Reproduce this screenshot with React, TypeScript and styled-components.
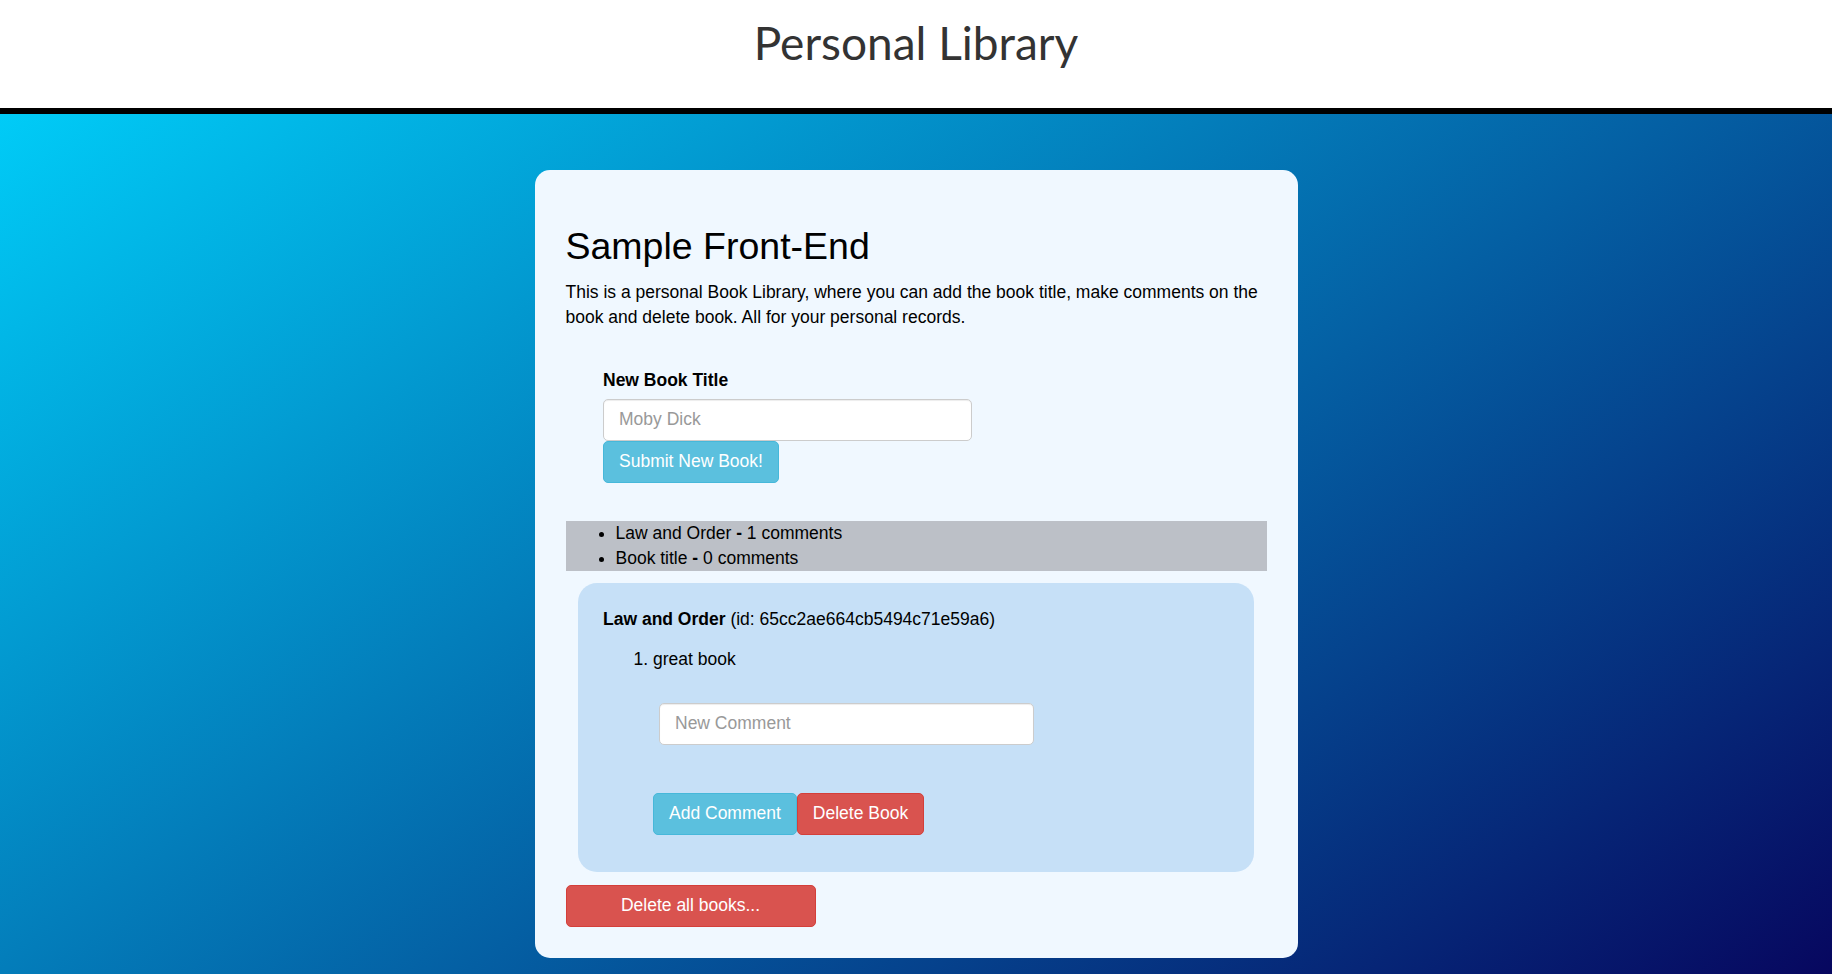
import React from "react";
import styled, { createGlobalStyle } from "styled-components";

const GlobalStyle = createGlobalStyle`
  html, body {
    margin: 0;
    padding: 0;
  }
  body {
    font-family: "Liberation Sans", Arial, sans-serif;
    font-size: 17.5px;
    line-height: 25px;
    color: #000;
  }
  * {
    box-sizing: border-box;
  }
`;

const Page = styled.div`
  min-height: 100vh;
  background: linear-gradient(145deg, #00d6ff 0%, #07075f 100%);
  overflow: hidden;
`;

const Header = styled.header`
  height: 114px;
  padding-top: 16px;
  background: #fff;
  border-bottom: 6px solid #000;
  text-align: center;

  h1 {
    margin: 0;
    font-family: Lato, "DejaVu Sans", sans-serif;
    font-size: 46px;
    font-weight: 400;
    line-height: 54px;
    color: #333;
  }
`;

const Card = styled.main`
  width: 763px;
  margin: 56px auto 15px;
  padding: 31px;
  background: #f0f8ff;
  border-radius: 15px;
`;

const Title = styled.h2`
  margin: 25px 0 12.5px;
  font-size: 37.5px;
  font-weight: 400;
  line-height: 1.1;
`;

const Intro = styled.p`
  margin: 0 0 12.5px;
`;

const NewBookForm = styled.form`
  padding: 25.5px 37.5px 38px;
`;

const Label = styled.label`
  display: block;
  margin-bottom: 6px;
  font-weight: 700;
`;

const TextInput = styled.input<{ $width: number }>`
  display: block;
  width: ${(p) => p.$width}px;
  height: 42px;
  padding: 7.5px 15px;
  font-family: inherit;
  font-size: 17.5px;
  line-height: 25px;
  color: #555;
  background: #fff;
  border: 1px solid #ccc;
  border-radius: 5px;
  box-shadow: inset 0 1px 1px rgba(0, 0, 0, 0.075);

  &::placeholder {
    color: #999;
  }
`;

const Button = styled.button<{ $variant: "info" | "danger"; $width?: number }>`
  display: inline-block;
  ${(p) => (p.$width ? `width: ${p.$width}px;` : "")}
  height: 42px;
  padding: 7.5px 15px;
  font-family: inherit;
  font-size: 17.5px;
  line-height: 25px;
  color: #fff;
  text-align: center;
  border-radius: 5px;
  cursor: pointer;
  background: ${(p) => (p.$variant === "info" ? "#5bc0de" : "#d9534f")};
  border: 1px solid ${(p) => (p.$variant === "info" ? "#46b8da" : "#d43f3a")};
`;

const BookList = styled.ul`
  margin: 0;
  padding-left: 50px;
  background: #bcc0c7;
  line-height: 25px;
`;

const Detail = styled.section`
  margin: 12.5px;
  padding: 24px 25px 25px;
  background: #c6e0f7;
  border-radius: 19px;
`;

const DetailTitle = styled.p`
  margin: 0 0 15px;
`;

const Comments = styled.ol`
  margin: 0 0 12.5px;
  padding-left: 50px;
`;

const CommentForm = styled.form`
  margin: 30.5px 0 0 6px;
`;

const Actions = styled.div`
  display: flex;
  margin-top: 48px;
`;

const books = [
  { title: "Law and Order", count: 1 },
  { title: "Book title", count: 0 },
];

export default function App() {
  return (
    <Page>
      <GlobalStyle />
      <Header>
        <h1>Personal Library</h1>
      </Header>
      <Card>
        <Title>Sample Front-End</Title>
        <Intro>
          This is a personal Book Library, where you can add the book title, make comments on the
          book and delete book. All for your personal records.
        </Intro>
        <NewBookForm onSubmit={(e) => e.preventDefault()}>
          <Label htmlFor="title">New Book Title</Label>
          <TextInput id="title" type="text" placeholder="Moby Dick" $width={369} />
          <Button type="submit" $variant="info">
            Submit New Book!
          </Button>
        </NewBookForm>
        <BookList>
          {books.map((b) => (
            <li key={b.title}>
              {b.title} <b>-</b> {b.count} comments
            </li>
          ))}
        </BookList>
        <Detail>
          <DetailTitle>
            <b>Law and Order</b> (id: 65cc2ae664cb5494c71e59a6)
          </DetailTitle>
          <Comments>
            <li>great book</li>
            <CommentForm onSubmit={(e) => e.preventDefault()}>
              <TextInput type="text" placeholder="New Comment" $width={375} />
            </CommentForm>
            <Actions>
              <Button $variant="info">Add Comment</Button>
              <Button $variant="danger">Delete Book</Button>
            </Actions>
          </Comments>
        </Detail>
        <Button $variant="danger" $width={250}>
          Delete all books...
        </Button>
      </Card>
    </Page>
  );
}
